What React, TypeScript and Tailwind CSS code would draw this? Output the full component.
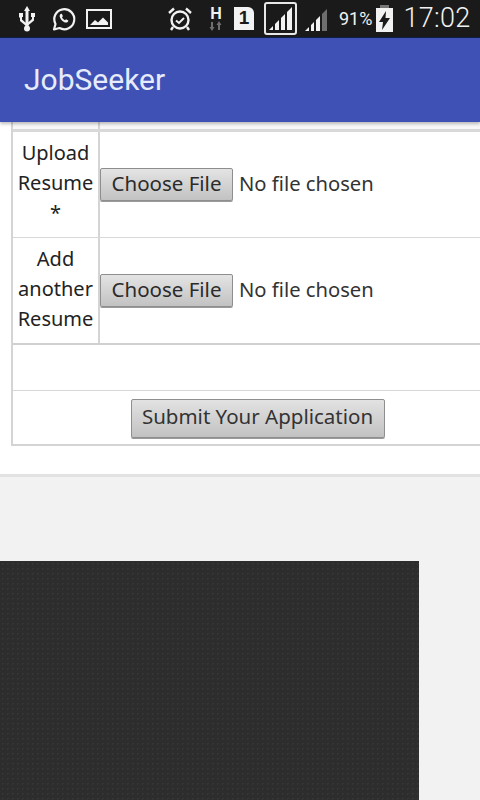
const ROW_LABEL = "w-[87px] shrink-0 border-r-2 border-[#d4d4d4] flex flex-col items-center justify-center text-center pb-[3px]";

function ChooseFile() {
  return (
    <div className="flex items-center">
      <button className="h-[33px] w-[133px] pb-[3px] rounded-[2px] border border-[#8e8e8e] bg-gradient-to-b from-[#e4e4e4] to-[#c2c2c2] text-[#2b2b2b] text-[20.5px] leading-none shadow-[0_1px_0_#9a9a9a]">
        Choose File
      </button>
      <span className="ml-[6px] mb-[3px] text-[20.2px] text-[#333]">No file chosen</span>
    </div>
  );
}

function StatusIcons() {
  return (
    <div className="h-[38px] bg-[#1a1a1a] border-b border-[#10204a] flex items-center text-[#f2f2f2] shrink-0">
      {/* usb */}
      <svg width="20" height="26" viewBox="0 0 20 26" className="ml-[17px]" fill="#f2f2f2">
        <path d="M8.500 4h3v16h-3z" />
        <path d="M10 0l3 5H7z" />
        <circle cx="10" cy="22.500" r="3" />
        <path d="M2 7h4v4H5v2.500l4 3.500v3l-6-5v-3.500H2zM14 7h4v4h-1v3.500l-6 5v-3l4-3.500V11h-1z" />
      </svg>
      {/* whatsapp */}
      <svg width="26" height="26" viewBox="0 0 26 26" className="ml-[14px]" fill="none">
        <path d="M3 23.500l1.500-5.500A10 10 0 1 1 8.500 22z" stroke="#f2f2f2" strokeWidth="2.200" strokeLinejoin="round" />
        <path d="M9.500 8c-1.500 1.500-1 3.500.8 5.700 2 2.300 4.200 3.500 6 2.500.8-.5 1-1.200 1-1.800l-2.300-1.200-1 1c-1.200-.4-2.400-1.600-3-3l.9-1-1-2.400z" fill="#f2f2f2" />
      </svg>
      {/* picture */}
      <svg width="26" height="22" viewBox="0 0 26 22" className="ml-[9px]" fill="none">
        <rect x="1" y="2" width="24" height="18" stroke="#f2f2f2" strokeWidth="2" />
        <path d="M4 17l5-5 3 2.500 5-5 5 5V17z" fill="#f2f2f2" />
      </svg>
      {/* alarm */}
      <svg width="26" height="26" viewBox="0 0 26 26" className="ml-[55px]" fill="none" stroke="#f2f2f2">
        <circle cx="13" cy="14" r="8.500" strokeWidth="2.400" />
        <path d="M9 14.500l3 2.500 5-5" strokeWidth="2" />
        <path d="M2 7l5-4.500M24 7l-5-4.500M6 21l-2 3M20 21l2 3" strokeWidth="2.400" />
      </svg>
      {/* network type */}
      <div className="ml-[15px] w-[16px] flex flex-col items-center">
        <span className="text-[16px] leading-[14px] font-bold font-['Liberation_Sans',sans-serif]">H</span>
        <svg width="14" height="10" viewBox="0 0 14 10" fill="#6f6f6f">
          <path d="M3 10L.500 6H2V1h2v5h1.500zM10 0l2.500 4H11v5H9V4H7.500z" />
        </svg>
      </div>
      {/* sim */}
      <div className="ml-[10px] h-[23px] w-[20px] bg-[#f2f2f2] rounded-tr-[6px] flex items-center justify-center text-[#1a1a1a] text-[19px] font-bold font-['Liberation_Sans',sans-serif]">
        1
      </div>
      <div className="ml-[10px] h-[33px] w-[33px] rounded-[3px] border-2 border-[#e8e8e8] flex items-end justify-center pb-[2px]">
        <svg width="26" height="26" viewBox="0 0 26 26" fill="#f2f2f2">
          <path d="M1 25l4-4v4zM7 25v-6l4-4v10zM13 25V13l4-4v16zM19 25V7l5-5v23z" />
        </svg>
      </div>
      <svg width="24" height="26" viewBox="0 0 24 26" className="ml-[7px]">
        <path d="M1 25l4-4v4zM7 25v-6l3-3v9zM12 25V14l4-4v15z" fill="#f2f2f2" />
        <path d="M18 25V8l5-5v22z" fill="#6e6e6e" />
      </svg>
      <span className="ml-[11px] text-[18px] tracking-[0px] font-['Roboto',sans-serif]">91%</span>
      {/* battery */}
      <div className="ml-[4px] relative h-[24px] w-[17px] bg-[#f2f2f2] flex items-center justify-center mt-[3px]">
        <div className="absolute -top-[3px] left-[4px] h-[3px] w-[9px] bg-[#777]" />
        <svg width="13" height="19" viewBox="0 0 13 19" fill="#1a1a1a">
          <path d="M8 0L1 11h4l-1 8 8-12H7.500z" />
        </svg>
      </div>
      <span className="ml-[10px] text-[27px] font-light tracking-[0.3px] font-['Roboto',sans-serif]">17:02</span>
    </div>
  );
}

export default function App() {
  return (
    <div className="h-[800px] w-[480px] overflow-hidden bg-[#f2f2f2] flex flex-col font-['Noto_Sans','Open_Sans',sans-serif]">
      <StatusIcons />

      <header className="h-[84px] shrink-0 bg-[#3f51b5] flex items-center pl-6 pb-[1px] shadow-[0_2px_3px_rgba(0,0,0,0.25)] z-10">
        <h1 className="text-[30px] text-[#e6ecfb] font-['Roboto',sans-serif]">JobSeeker</h1>
      </header>

      {/* form card */}
      <div className="h-[355px] shrink-0 bg-white border-b-[3px] border-[#e2e2e2] pl-[11px] overflow-hidden">
        <div className="w-[480px] h-[324px] border-l-2 border-b-2 border-[#d4d4d4] flex flex-col text-[#222] text-[20px] leading-[30px]">
          <div className="h-[10px] flex border-b-[3px] border-[#d9d9d9] bg-[#f8f8f8]">
            <div className="w-[87px] border-r-2 border-[#d4d4d4]" />
          </div>
          <div className="h-[106px] flex border-b border-[#d8d8d8]">
            <div className={ROW_LABEL}>
              <span>Upload</span>
              <span>Resume</span>
              <span>*</span>
            </div>
            <div className="flex items-center">
              <ChooseFile />
            </div>
          </div>
          <div className="h-[107px] flex border-b-2 border-[#d0d0d0]">
            <div className={ROW_LABEL}>
              <span>Add</span>
              <span>another</span>
              <span>Resume</span>
            </div>
            <div className="flex items-center">
              <ChooseFile />
            </div>
          </div>
          <div className="h-[46px] border-b border-[#d8d8d8]" />
          <div className="h-[53px] flex items-start justify-center pt-2 pl-[11px]">
            <button className="h-[39px] w-[254px] pb-[4px] rounded-[2px] border border-[#8e8e8e] bg-gradient-to-b from-[#e2e2e2] to-[#c2c2c2] text-[#333] text-[20.5px] leading-none shadow-[0_1px_0_#9a9a9a]">
              Submit Your Application
            </button>
          </div>
        </div>
      </div>

      {/* dark footer block */}
      <div className="mt-[84px] w-[419px] flex-1 bg-[#2d2d2d] bg-[radial-gradient(#363636_1px,transparent_1px)] bg-[length:5px_5px]" />
    </div>
  );
}
